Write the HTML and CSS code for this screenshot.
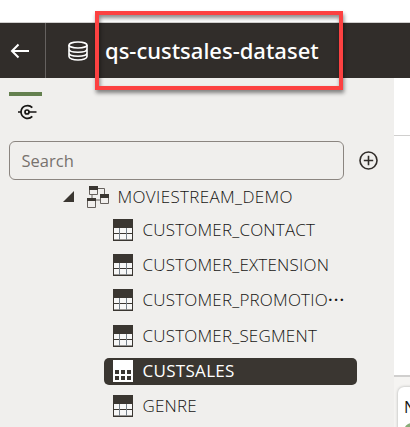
FILE: index.html
```html
<!DOCTYPE html>
<html lang="en">
<head>
<meta charset="utf-8">
<title>qs-custsales-dataset</title>
<link rel="stylesheet" href="styles.css">
</head>
<body>
<svg class="defs" aria-hidden="true">
  <symbol id="table" viewBox="0 0 20 22">
    <path fill="#f7f7f7" d="M1 9H19V21H1Z"/>
    <path fill="currentColor" d="M0 0H20V9H0ZM0 9H1V22H0ZM19 9H20V22H19ZM1 14H19V15H1ZM1 20.500H19V22H1Z"/>
    <path fill="#77818a" d="M6 9H7V21H6ZM13 9H14V21H13Z"/>
  </symbol>
  <symbol id="table-selected" viewBox="0 0 20 22">
    <path fill="currentColor" d="M0 0H20V22H0Z"/>
    <path fill="#3a3631" d="M2 10H6V14H2ZM8 10H12V14H8ZM14 10H18V14H14ZM2 16H6V20H2ZM8 16H12V20H8ZM14 16H18V20H14Z"/>
  </symbol>
</svg>
<div class="app">
  <header class="header">
    <div class="back"><svg width="20" height="16" viewBox="0 0 20 16"><path d="M19 8H2M8.500 1.500L2 8l6.500 6.500" fill="none" stroke="#fff" stroke-width="2"/></svg></div>
    <svg class="db" width="20" height="20" viewBox="0 0 20 20" fill="none" stroke="#fff" stroke-width="1.600"><ellipse cx="10" cy="4" rx="9" ry="3"/><path d="M1 4V15.500C1 17.500 5 19 10 19S19 17.500 19 15.500V4M1 8C1 10 5 11.300 10 11.300S19 10 19 8M1 12C1 14 5 15.200 10 15.200S19 14 19 12"/></svg>
    <h1 class="title">qs-custsales-dataset</h1>
  </header>
  <main class="main">
    <aside class="sidebar">
      <div class="tab"><svg width="19" height="16" viewBox="0 0 19 16" fill="none" stroke="#161513" stroke-width="1.700"><path d="M14.300 3.600A6.600 6.600 0 0 0 3 8A6.600 6.600 0 0 0 14.300 12.400M0 8H3M11 8H18.500"/><circle cx="9" cy="8" r="2"/></svg></div>
      <div class="searchbar">
        <div class="search">Search</div>
        <svg width="19" height="19" viewBox="0 0 19 19" fill="none" stroke="#312d2a" stroke-width="1.600"><circle cx="9.500" cy="9.500" r="8.500"/><path d="M9.500 4.800V14.200M4.800 9.500H14.200"/></svg>
      </div>
      <div class="schema">
        <svg width="11" height="11" viewBox="0 0 11 11"><path d="M11 0V11H0Z" fill="#3a3631"/></svg>
        <svg class="schema-icon" width="23" height="22" viewBox="0 0 23 22"><path d="M11 2.500H17.500V8M5 9V12M9 14H14" fill="none" stroke="#66615d"/><g fill="#f1efed" stroke="#66615d"><path d="M2.500 .5H10.500V8.500H2.500ZM13.500 8.500H21.500V17.500H13.500ZM.5 12.500H8.500V21.500H.5Z"/></g><path d="M2 0H11V4H2ZM13 8H22V12H13ZM0 12H9V15H0Z" fill="#3a3631"/></svg>
        <span class="name">MOVIESTREAM_DEMO</span>
      </div>
      <ul class="tables">
        <li><svg><use href="#table"/></svg><span class="name">CUSTOMER_CONTACT</span></li>
        <li><svg><use href="#table"/></svg><span class="name">CUSTOMER_EXTENSION</span></li>
        <li><svg><use href="#table"/></svg><span class="name">CUSTOMER_PROMOTIO<span class="dots">···</span></span></li>
        <li><svg><use href="#table"/></svg><span class="name">CUSTOMER_SEGMENT</span></li>
        <li class="selected"><svg><use href="#table-selected"/></svg><span class="name">CUSTSALES</span></li>
        <li><svg><use href="#table"/></svg><span class="name">GENRE</span></li>
      </ul>
    </aside>
    <section class="content">
      <div class="toolbar"></div>
      <div class="canvas"></div>
      <div class="preview"><div class="card"><span>N</span><i class="dot"></i></div></div>
    </section>
  </main>
  <div class="highlight"></div>
</div>
</body>
</html>
```
FILE: styles.css
```css
* { box-sizing: border-box; }
body { margin: 0; font: 16px/22px "Open Sans", "Noto Sans", sans-serif; color: #161513; background: #fff; }
.defs { position: absolute; width: 0; height: 0; }
svg { display: block; flex: none; }
.app { position: relative; width: 410px; height: 427px; padding-top: 22px; overflow: hidden; display: flex; flex-direction: column; }
.header { height: 56px; flex: none; background: #312d2a; border-top: 1px solid #d0cfce; display: flex; align-items: center; }
.back { width: 46px; height: 55px; border-right: 1px solid #65615f; padding-left: 10px; display: flex; align-items: center; }
.db { margin-left: 22px; }
.title { margin: 0 0 0 17px; padding-bottom: 1px; font: 500 22px/30px "Noto Sans", sans-serif; color: #fff; white-space: nowrap; }
.main { flex: 1; display: flex; min-height: 0; }
.sidebar { width: 394px; flex: none; background: #f0efed; padding: 14px 0 0 9px; }
.tab { width: 33px; height: 49px; border-top: 4px solid #64804f; padding: 8px 0 0 9px; }
.searchbar { display: flex; align-items: center; gap: 15px; }
.search { width: 335px; height: 39px; border: 1px solid #8b8580; border-radius: 6px; padding: 8px 11.500px; color: #77726d; font-size: 16.500px; }
.schema { display: flex; align-items: center; height: 33px; padding-left: 54px; }
.schema-icon { margin: 0 7.500px 0 13px; }
.name { white-space: nowrap; font-size: 17px; font-weight: 350; letter-spacing: 0.200px; }
.schema .name { letter-spacing: 0.350px; }
.tables { list-style: none; margin: 0; padding: 4px 0 0; }
.tables li { height: 27px; margin: 0 0 8.200px 95px; width: 253px; padding: 0 0 1px 9px; display: flex; align-items: center; gap: 9.500px; border-radius: 5px; color: #3a3631; }
.tables svg { width: 20px; height: 22px; }
.tables .name { color: #161513; }
.tables .selected { background: #3a3631; color: #fff; }
.tables .selected .name { color: #fff; font-weight: 400; letter-spacing: 0.300px; }
.dots { letter-spacing: 1.200px; font-weight: 600; }
.content { flex: 1; min-width: 0; display: flex; flex-direction: column; }
.toolbar { height: 58px; flex: none; border-bottom: 1px solid #d0cfce; }
.canvas { height: 241px; flex: none; border-bottom: 2px solid #d0cfce; }
.preview { flex: 1; min-height: 0; background: #f5f4f2; padding: 10px 0 0 4px; }
.card { width: 60px; height: 60px; background: #fff; border-radius: 6px; padding: 9px 0 0 6px; box-shadow: 0 0 3px #aaa; }
.card span { display: block; font-size: 16px; height: 27px; }
.dot { display: block; width: 16px; height: 16px; border-radius: 50%; background: #8aad79; }
.highlight { position: absolute; left: 95px; top: 11px; width: 248px; height: 79px; border: 4px solid #fc4141; box-shadow: 1px 3px 4px #0007, inset 1px 3px 4px #0007; }
```
